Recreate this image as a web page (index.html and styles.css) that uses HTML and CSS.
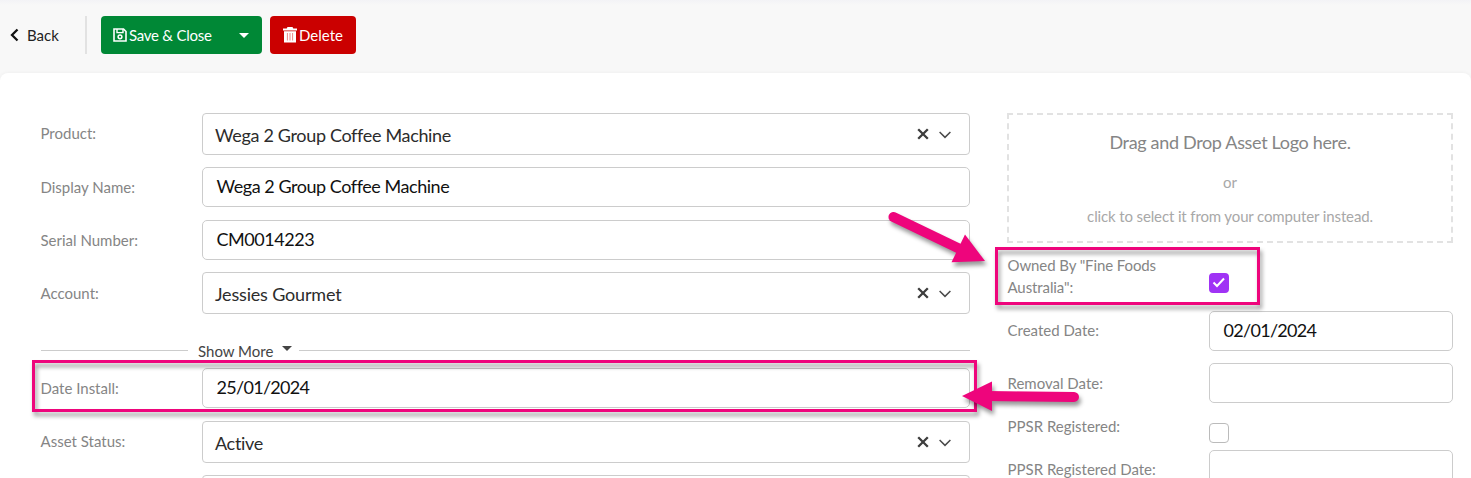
FILE: index.html
```html
<!DOCTYPE html>
<html lang="en">
<head>
  <meta charset="UTF-8" />
  <meta name="viewport" content="width=device-width, initial-scale=1.0"/>
  <title>Edit Asset</title>
  <link rel="stylesheet" href="styles.css">
</head>
<body>
  <svg class="sprite" width="0" height="0">
    <symbol id="clear" viewBox="0 0 12 12"><path d="M1.2 1.2 10.8 10.8M10.8 1.2 1.2 10.8" fill="none" stroke="#3d3d3d" stroke-width="2.3"/></symbol>
    <symbol id="chevron" viewBox="0 0 12 8"><path d="M.6 1 6 6.4 11.4 1" fill="none" stroke="#4a4a4a" stroke-width="1.5"/></symbol>
  </svg>

  <div class="toolbar">
    <a class="back">
      <svg width="9" height="14" viewBox="0 0 9 14"><path d="M7.5 1.5 2 7l5.5 5.5" fill="none" stroke="#111" stroke-width="2.3"/></svg>
      <span class="back-text">Back</span>
    </a>
    <div class="save">
      <svg width="14" height="14" viewBox="0 0 14 14" fill="none" stroke="#fff" stroke-width="1.6">
        <path d="M1 1h9.5L13 3.5V13H1z"/>
        <path d="M4 1v3.6h6V1" stroke-width="1.4"/>
        <circle cx="7" cy="8.8" r="1.9" stroke-width="1.5"/>
      </svg>
      <span class="save-text">Save &amp; Close</span>
      <svg class="caret" width="10" height="5" viewBox="0 0 10 5"><path d="M0 0h10L5 5z" fill="#fff"/></svg>
    </div>
    <div class="delete">
      <svg width="14" height="16" viewBox="0 0 14 16">
        <path d="M4.5 0h5l.8 1.4H14v2.2H0V1.4h3.7zM1 4.2h12V15.4H1z" fill="#fff"/>
        <path d="M4.4 6v7.5M7 6v7.5M9.6 6v7.5" stroke="#e88" stroke-width="1"/>
      </svg>
      <span class="delete-text">Delete</span>
    </div>
  </div>

  <div class="card">
    <div class="main-col">
      <div class="row">
        <label>Product:</label>
        <div class="select"><span class="value">Wega 2 Group Coffee Machine</span><svg class="x"><use href="#clear"/></svg><svg class="chev"><use href="#chevron"/></svg></div>
      </div>
      <div class="row">
        <label>Display Name:</label>
        <div class="input"><span class="value">Wega 2 Group Coffee Machine</span></div>
      </div>
      <div class="row serial">
        <label>Serial Number:</label>
        <div class="input"><span class="value">CM0014223</span></div>
      </div>
      <div class="row account">
        <label>Account:</label>
        <div class="select"><span class="value">Jessies Gourmet</span><svg class="x"><use href="#clear"/></svg><svg class="chev"><use href="#chevron"/></svg></div>
      </div>
      <div class="show-more">
        <span class="line left"></span>
        <span class="more-text">Show More</span>
        <svg width="10" height="5" viewBox="0 0 10 5"><path d="M0 0h10L5 5z" fill="#444"/></svg>
        <span class="line right"></span>
      </div>
      <div class="row install">
        <label>Date Install:</label>
        <div class="input"><span class="value date">25/01/2024</span></div>
      </div>
      <div class="row status">
        <label>Asset Status:</label>
        <div class="select"><span class="value">Active</span><svg class="x"><use href="#clear"/></svg><svg class="chev"><use href="#chevron"/></svg></div>
      </div>
      <div class="row">
        <label></label>
        <div class="select"></div>
      </div>
    </div>

    <div class="side-col">
      <div class="dropzone">
        <p class="drop-title">Drag and Drop Asset Logo here.</p>
        <p class="drop-or">or</p>
        <p class="drop-hint">click to select it from your computer instead.</p>
      </div>
      <div class="row owned">
        <label>Owned By "Fine Foods Australia":</label>
        <div class="checkbox checked"><svg width="14" height="12" viewBox="0 0 14 12"><path d="M1.5 5.5 5 9l7-7.5" fill="none" stroke="#fff" stroke-width="2"/></svg></div>
      </div>
      <div class="row created">
        <label>Created Date:</label>
        <div class="input"><span class="value date">02/01/2024</span></div>
      </div>
      <div class="row removal">
        <label>Removal Date:</label>
        <div class="input"></div>
      </div>
      <div class="row ppsr">
        <label>PPSR Registered:</label>
        <div class="checkbox"></div>
      </div>
      <div class="row ppsr-date">
        <label>PPSR Registered Date:</label>
        <div class="input"></div>
      </div>
    </div>
  </div>

  <!-- callouts over the form -->
  <svg class="callouts" width="1471" height="478" viewBox="0 0 1471 478">
    <g class="callout"><rect x="996.5" y="248.5" width="262" height="55"/></g>
    <g class="callout"><rect x="33.5" y="361.5" width="942" height="49"/></g>
    <g class="callout">
      <path class="shaft" d="M893.5 217 962 250"/>
      <path class="head" d="M985 261 951.5 262.3 965 234.5z"/>
    </g>
    <g class="callout">
      <path class="shaft" d="M988 396 1074 397"/>
      <path class="head" d="M962 396 992 381.5V411z"/>
    </g>
  </svg>
</body>
</html>
```
FILE: styles.css
```css
* {
  box-sizing: border-box;
}

body {
  font-family: Lato, "Liberation Sans", sans-serif;
  font-size: 15px;
  background: #f8f8f8;
  margin: 0;
  height: 478px;
  overflow: hidden;
  position: relative;
}

.sprite {
  display: block;
}

.toolbar {
  height: 73px;
  padding: 16px 0 0 10px;
  display: flex;
  align-items: flex-start;
  background: linear-gradient(#f3f3f6, #f8f8f8 5px);
}

.back {
  width: 77px;
  height: 38px;
  border-right: 2px solid #e2e2e2;
  display: flex;
  align-items: center;
  gap: 8px;
  color: #222;
}

.save, .delete {
  height: 38px;
  border-radius: 4px;
  display: flex;
  align-items: center;
  color: #fff;
  white-space: nowrap;
}

.save {
  width: 161px;
  margin-left: 14px;
  padding: 0 13px 0 12px;
  background: #008836;
}

.save-text {
  margin-left: 2px;
  letter-spacing: -0.25px;
}

.caret {
  margin-left: auto;
}

.delete {
  width: 86px;
  margin-left: 8px;
  padding-left: 13px;
  background: #cb0000;
}

.delete-text {
  margin-left: 2px;
}

.card {
  height: 405px;
  padding: 40px 18px 0 40px;
  border-radius: 8px 8px 0 0;
  background: #fff;
  box-shadow: 0 0 4px rgba(0, 0, 0, 0.05);
  display: flex;
  gap: 37px;
  overflow: hidden;
}

.main-col {
  width: 930px;
}

.side-col {
  width: 446px;
}

.row {
  display: flex;
  margin-bottom: 12px;
}

label {
  width: 162px;
  padding: 9px 0 0 0.5px;
  line-height: 22px;
  color: #858585;
  flex: none;
}

.input, .select {
  flex: 1;
  height: 40px;
  border: 1px solid #ccc;
  border-radius: 5px;
  padding: 0 13.5px 2px;
  display: flex;
  align-items: center;
  font-size: 18px;
  letter-spacing: -0.45px;
  color: #111;
}

.select {
  height: 42px;
  padding: 2px 18.5px 0 12px;
  border-radius: 4px;
  letter-spacing: -0.33px;
  color: #2c2c2c;
}

.account .select {
  letter-spacing: -0.18px;
}

.date {
  letter-spacing: -0.7px;
}

.x {
  width: 12px;
  height: 12px;
  margin: -3px 10px 0 auto;
}

.chev {
  width: 12px;
  height: 8px;
}

.serial {
  margin-top: 13px;
}

.account label {
  padding-top: 10px;
}

.show-more {
  height: 42px;
  padding-top: 8px;
  display: flex;
  align-items: center;
  color: #444;
}

.line {
  height: 1px;
  margin-top: -2px;
  background: #ccc;
}

.line.left {
  width: 147px;
  margin-left: 1px;
  margin-right: 10px;
}

.line.right {
  flex: 1;
  margin-left: 7px;
}

.more-text {
  width: 84px;
}

.show-more svg {
  margin-top: -6px;
}

.install {
  margin-bottom: 13px;
}

.dropzone {
  height: 130px;
  border: 2px dashed #e2e2e2;
  text-align: center;
  padding-top: 15px;
  color: #a8a8a8;
}

.dropzone p {
  margin: 0;
  line-height: 24px;
}

.dropzone .drop-title {
  font-size: 18px;
  letter-spacing: -0.33px;
  color: #858585;
}

.dropzone .drop-or {
  margin-top: 16px;
}

.dropzone .drop-hint {
  margin-top: 10px;
  letter-spacing: -0.13px;
}

.side-col label {
  width: 202px;
  padding-right: 30px;
}

.side-col .ppsr-date label {
  padding-right: 0;
}

.owned {
  height: 56px;
}

.owned label {
  padding-top: 11px;
  letter-spacing: -0.1px;
}

.created label {
  padding-top: 8px;
}

.checkbox {
  width: 20px;
  height: 20px;
  border: 1px solid #bbb;
  border-radius: 4px;
}

.checkbox.checked {
  margin-top: 30px;
  border: none;
  background: #a033f5;
  display: flex;
  align-items: center;
  justify-content: center;
}

.ppsr {
  height: 35px;
  margin-bottom: 0;
}

.ppsr label {
  padding-top: 0;
}

.ppsr .checkbox {
  margin-top: 8px;
}

.ppsr-date label {
  padding-top: 8px;
}

.callouts {
  position: absolute;
  top: 0;
  left: 0;
}

.callout {
  filter: drop-shadow(2px 4px 2px rgba(0, 0, 0, 0.4));
}

.callout rect {
  fill: none;
  stroke: #ee057c;
  stroke-width: 3;
}

.shaft {
  stroke: #ee057c;
  stroke-width: 10;
  stroke-linecap: round;
}

.head {
  fill: #ee057c;
}
```
